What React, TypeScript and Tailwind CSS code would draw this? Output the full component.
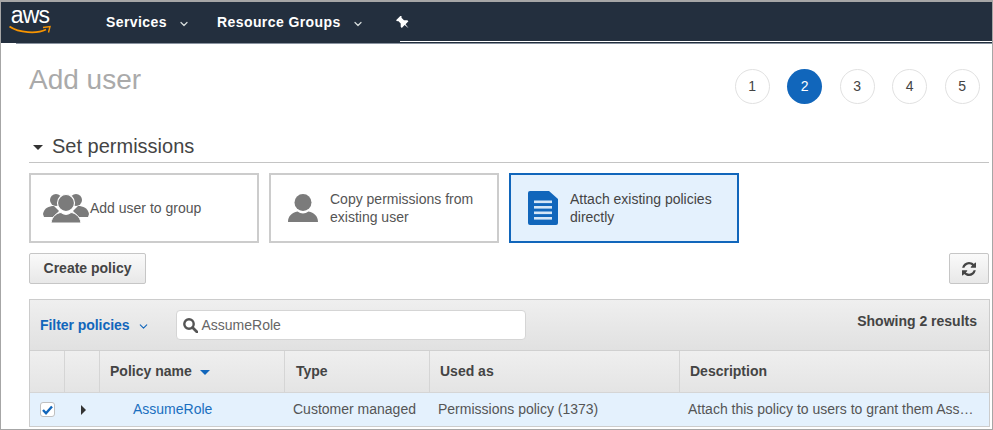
import React from "react";
import { ChevronDown } from "lucide-react";

const font = "font-['Liberation_Sans',Arial,sans-serif]";

function Aws() {
  return (
    <div className="w-[42px] h-[32px] relative flex flex-col items-center">
      <span className="text-white text-[23px] leading-[20px] tracking-[-0.8px] font-normal font-['Liberation_Sans',sans-serif]">aws</span>
      <svg width="42" height="10" viewBox="0 0 42 10" className="absolute left-0 top-[20px]">
        <path d="M0.5 1.5C10 8 28 9 37 4.5" stroke="#f79400" strokeWidth="1.8" fill="none" />
        <path d="M34 2.500L41 1.500L39.500 7.500" stroke="#f79400" strokeWidth="1.4" fill="none" />
      </svg>
    </div>
  );
}

function PinIcon() {
  return (
    <svg width="14" height="14" viewBox="0 0 14 15" fill="#fff">
      <path
        transform="rotate(-45 7 7)"
        d="M3.500 0H10.500V1.500L9.500 2.200V6L12 8.500V10.200H7.700L7 15.500L6.300 10.200H2V8.500L4.500 6V2.200L3.500 1.500Z"
      />
    </svg>
  );
}

function Step({ n, active }: { n: number; active?: boolean }) {
  return (
    <div
      className={
        "w-[35px] h-[35px] rounded-full flex items-center justify-center text-[14px] " +
        (active ? "bg-[#1166bb] text-white" : "border border-[#e1e1e1] text-[#444]")
      }
    >
      {n}
    </div>
  );
}

function GroupIcon() {
  return (
    <svg width="46" height="30" viewBox="0 0 46 30" fill="#7b7b7b">
      <circle cx="13" cy="7" r="6" />
      <circle cx="33" cy="7" r="6" />
      <path d="M0 21C1 15 6 13 11 13L16 18L10 24H1Z" />
      <path d="M46 21C45 15 40 13 35 13L30 18L36 24H45Z" />
      <circle cx="23" cy="10" r="8.500" stroke="#fff" strokeWidth="1.200" />
      <path d="M8 30C9 23 14 20 18 19.500C21 22 25 22 28 19.500C32 20 37 23 38 30Z" stroke="#fff" strokeWidth="1" />
    </svg>
  );
}

function UserIcon() {
  return (
    <svg width="30" height="28" viewBox="0 0 30 28" fill="#7b7b7b">
      <circle cx="15" cy="8.500" r="8.500" />
      <path d="M0 28C0 22 4 18.500 9.500 17.500C13 20 17 20 20.500 17.500C26 18.500 30 22 30 28Z" />
    </svg>
  );
}

function DocIcon() {
  return (
    <svg width="30" height="34" viewBox="0 0 30 34">
      <path d="M2 0H21L30 8V32a2 2 0 0 1-2 2H2a2 2 0 0 1-2-2V2a2 2 0 0 1 2-2Z" fill="#1166bb" />
      <rect x="6" y="9.500" width="18" height="2.600" fill="#d5e6f7" />
      <rect x="6" y="15" width="18" height="2.600" fill="#d5e6f7" />
      <rect x="6" y="20.500" width="18" height="2.600" fill="#d5e6f7" />
      <rect x="6" y="26" width="18" height="2.600" fill="#d5e6f7" />
    </svg>
  );
}

function Refresh() {
  return (
    <svg width="14" height="14" viewBox="0 0 1536 1536" fill="#444">
      <path d="M1511 928q0 5-1 7-64 268-268 434.500T764 1536q-146 0-282.500-55T238 1324l-129 129q-19 19-45 19t-45-19-19-45V960q0-26 19-45t45-19h448q26 0 45 19t19 45-19 45l-137 137q71 66 161 102t187 36q134 0 250-65t186-179q11-17 53-117 8-23 30-23h192q13 0 22.500 9.500t9.500 22.500zm25-800v448q0 26-19 45t-45 19h-448q-26 0-45-19t-19-45 19-45l138-138Q969 256 768 256q-134 0-250 65T332 500q-11 17-53 117-8 23-30 23H50q-13 0-22.500-9.500T18 608v-7q65-268 270-434.500T768 0q146 0 284 55.500T1297 212l130-129q19-19 45-19t45 19 19 45z" />
    </svg>
  );
}

function Th({ w, children, border = true, pl = "pl-[10px]" }: { w: string; children?: React.ReactNode; border?: boolean; pl?: string }) {
  return (
    <div className={`${w} ${pl} h-full flex items-center text-[14px] font-bold text-[#444] ${border ? "border-r border-[#d5d5d5]" : ""}`}>
      {children}
    </div>
  );
}

function Card({
  icon,
  active,
  children,
  pad,
}: {
  icon: React.ReactNode;
  active?: boolean;
  children: React.ReactNode;
  pad: string;
}) {
  return (
    <div
      className={
        "w-[230px] h-[70px] border-2 flex items-center text-[14px] leading-[18px] " +
        pad +
        " " +
        (active ? "border-[#1166bb] bg-[#e4f1fd] text-[#444]" : "border-[#cccccc] bg-white text-[#555]")
      }
    >
      {icon}
      {children}
    </div>
  );
}

export default function App() {
  return (
    <div className={`${font} w-[993px] h-[430px] overflow-hidden bg-white border-t-2 border-l border-r border-b border-[#a6a6a6] flex flex-col`}>
      <nav className="h-[41px] shrink-0 bg-[#232f3e] flex items-center text-white text-[14px] font-bold tracking-[0.42px] relative">
        <div className="ml-[8px] mt-[-4px]">
          <Aws />
        </div>
        <span className="ml-[55px]">Services</span>
        <ChevronDown size={12} strokeWidth={2.500} className="ml-[11px] mt-[2px] text-[#d5dbdb]" />
        <span className="ml-[27px]">Resource Groups</span>
        <ChevronDown size={12} strokeWidth={2.500} className="ml-[11px] mt-[2px] text-[#d5dbdb]" />
        <span className="ml-[32px] mt-[1px]">
          <PinIcon />
        </span>
        <div className="absolute left-[399px] right-0 bottom-[1px] h-px bg-white" />
        <div className="absolute left-[15px] right-0 bottom-[-1px] h-px bg-[#8a93a0]" />
      </nav>

      <div className="flex-1 pl-[28px] pr-[3px] flex flex-col">
        <div className="flex justify-between h-[88px] shrink-0 relative">
          <h1 className="text-[28px] leading-[32px] mt-[21px] text-[#aaaaaa] font-normal">Add user</h1>
          <div className="flex gap-[17.5px] mt-[26px] mr-[9.3px] h-[35px]">
            <Step n={1} />
            <Step n={2} active />
            <Step n={3} />
            <Step n={4} />
            <Step n={5} />
          </div>
        </div>
        <div className="h-[32px] shrink-0 border-b border-[#c4c4c4] flex items-center text-[#444] text-[20px] pb-[1px]">
          <span className="w-0 h-0 ml-[4px] mr-[9px] mt-[3px] border-l-[5px] border-r-[5px] border-t-[5px] border-l-transparent border-r-transparent border-t-[#333]" />
          Set permissions
        </div>
        <div className="flex gap-[10px] mt-[10px] shrink-0">
          <Card pad="pl-[12px]" icon={<GroupIcon />}>
            <span className="ml-[1px]">Add user to group</span>
          </Card>
          <Card pad="pl-[17px]" icon={<UserIcon />}>
            <span className="ml-[12px]">Copy permissions from<br />existing user</span>
          </Card>
          <Card pad="pl-[17px]" active icon={<DocIcon />}>
            <span className="ml-[12px]">Attach existing policies<br />directly</span>
          </Card>
        </div>
        <div className="flex justify-between mt-[10px] shrink-0">
          <button className="w-[117px] h-[31px] rounded-[2px] border border-[#c6c6c6] bg-gradient-to-b from-[#fafafa] to-[#e8e8e8] text-[14px] font-bold text-[#444]">
            Create policy
          </button>
          <button className="w-[40px] h-[31px] rounded-[2px] border border-[#c6c6c6] bg-gradient-to-b from-[#fafafa] to-[#e8e8e8] flex items-center justify-center">
            <Refresh />
          </button>
        </div>
        <div className="mt-[15px] border-t border-x border-[#cccccc] w-[961px] shrink-0">
          <div className="h-[51px] bg-gradient-to-b from-[#efefef] to-[#e1e1e1] border-b border-[#d0d0d0] flex items-start relative">
            <span className="ml-[10px] mt-[17px] text-[14px] leading-[16px] font-bold text-[#1166bb] tracking-[-0.05px]">Filter policies</span>
            <ChevronDown size={13} strokeWidth={2} className="ml-[7px] mt-[20px] text-[#1166bb]" />
            <div className="ml-[26px] mt-[10px] w-[350px] h-[30px] rounded-[4px] bg-white border border-[#d5d5d5] flex items-center pl-[6px] text-[14px] text-[#666]">
              <svg width="15" height="15" viewBox="0 0 15 15" fill="none" stroke="#555" strokeWidth="2.400" className="mr-[4px] shrink-0">
                <circle cx="6" cy="6" r="4.700" />
                <path d="M9.500 9.500L14 14" strokeWidth="2.800" strokeLinecap="round" />
              </svg>
              AssumeRole
            </div>
            <span className="absolute right-[12px] top-[13px] text-[14px] leading-[16px] font-bold text-[#444]">Showing 2 results</span>
          </div>
          <div className="h-[42px] bg-gradient-to-b from-[#efefef] to-[#e4e4e4] flex border-b border-[#d5d5d5]">
            <Th w="w-[35px]" />
            <Th w="w-[35px]" />
            <Th w="w-[185px]">
              Policy name
              <span className="w-0 h-0 ml-[8px] mt-[2px] border-l-[5px] border-r-[5px] border-t-[5px] border-l-transparent border-r-transparent border-t-[#1166bb]" />
            </Th>
            <Th w="w-[145px]" pl="pl-[11px]">Type</Th>
            <Th w="w-[250px]">Used as</Th>
            <Th w="w-[309px]" border={false}>Description</Th>
          </div>
          <div className="h-[34px] bg-[#e4f1fd] flex items-center text-[14px] text-[#555] border-b border-[#cccccc]">
            <div className="w-[35px] flex justify-center">
              <span className="w-[15px] h-[15px] rounded-[3px] bg-white border border-[#c0c0c0] flex items-center justify-center mr-[1px]">
                <svg width="11" height="10" viewBox="0 0 11 10">
                  <path d="M1 5L4 8.200L10 1.500" stroke="#1166bb" strokeWidth="2.400" fill="none" />
                </svg>
              </span>
            </div>
            <div className="w-[35px] flex justify-center">
              <span className="w-0 h-0 ml-[1px] border-t-[5px] border-b-[5px] border-l-[5px] border-t-transparent border-b-transparent border-l-[#333]" />
            </div>
            <div className="w-[185px] pl-[33px] text-[#1a6fbf]">AssumeRole</div>
            <div className="w-[145px] pl-[8px]">Customer managed</div>
            <div className="w-[250px] pl-[8px]">Permissions policy (1373)</div>
            <div className="w-[309px] pl-[8px] whitespace-nowrap">Attach this policy to users to grant them Ass…</div>
          </div>
        </div>
      </div>
    </div>
  );
}
